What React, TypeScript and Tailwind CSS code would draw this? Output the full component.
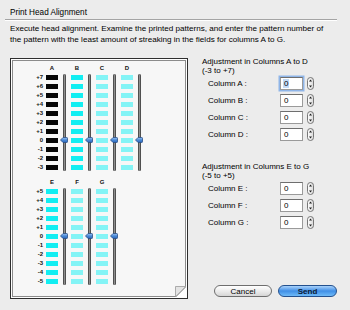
import React from "react";

type GroupProps = {
  letters: string[];
  colors: string[];
  labels: string[];
  knobTop: string;
};

function Knob({ top }: { top: string }) {
  return (
    <svg
      width="8"
      height="6"
      viewBox="0 0 8 6"
      className={"absolute left-[-4px] " + top}
    >
      <defs>
        <linearGradient id="kg" x1="0" y1="0" x2="0" y2="1">
          <stop offset="0" stopColor="#9cc4f2" />
          <stop offset="0.5" stopColor="#4a8ad8" />
          <stop offset="1" stopColor="#2a64b8" />
        </linearGradient>
      </defs>
      <path
        d="M0.5 3 L3 0.5 H6.8 Q7.5 0.5 7.5 1.3 V4.7 Q7.5 5.5 6.8 5.5 H3 Z"
        fill="url(#kg)"
        stroke="#284e86"
        strokeWidth="0.8"
      />
    </svg>
  );
}

function Group({ letters, colors, labels, knobTop }: GroupProps) {
  return (
    <div className="flex">
      <div className="flex w-[30px] flex-col items-end">
        <div className="h-[9px]" />
        {labels.map((l) => (
          <div key={l} className="h-[9px] text-[6px] font-bold leading-[9px] text-[#111]">
            {l}
          </div>
        ))}
      </div>
      <div className="ml-[3px] flex">
        {letters.map((letter, i) => (
          <div key={letter} className="flex">
            <div className="flex w-[12px] flex-col items-center">
              <div className="h-[9px] text-[6px] font-bold leading-[9px] text-[#111]">{letter}</div>
              {labels.map((l) => (
                <div key={l} className="flex h-[9px] items-center">
                  <div className={"h-[5px] w-[12px] " + colors[i]} />
                </div>
              ))}
            </div>
            <div className="mx-[5px] flex w-[3px] flex-col">
              <div className="h-[9px]" />
              <div className="relative mt-[1px] h-[97px] w-[3px] rounded-full border-l border-r border-[#505050] bg-[#8e8e8e]">
                <Knob top={knobTop} />
              </div>
            </div>
          </div>
        ))}
      </div>
    </div>
  );
}

function Stepper() {
  return (
    <svg width="7" height="13" viewBox="0 0 7 13">
      <defs>
        <linearGradient id="sg" x1="0" y1="0" x2="1" y2="0">
          <stop offset="0" stopColor="#ffffff" />
          <stop offset="1" stopColor="#d8d8d8" />
        </linearGradient>
      </defs>
      <rect x="0.5" y="0.5" width="6" height="12" rx="3" fill="url(#sg)" stroke="#6a6a6a" strokeWidth="0.9" />
      <path d="M3.5 2.4 L5 4.4 H2 Z" fill="#222" />
      <path d="M3.5 10.6 L5 8.6 H2 Z" fill="#222" />
    </svg>
  );
}

function FieldRow({ label, focused }: { label: string; focused?: boolean }) {
  return (
    <div className="flex h-[17px] items-center">
      <div className="w-[78px] pl-[6px] text-[8px] leading-[9px]">{label}</div>
      <div
        className={
          "flex h-[13px] w-[23px] items-center border border-[#9a9a9a] border-t-[#6e6e6e] bg-white pl-[2px] text-[8px] leading-[9px] " +
          (focused ? "ring-[1.5px] ring-[#8fb5e8]" : "")
        }
      >
        {focused ? <span className="bg-[#c3dbf7] px-[1px]">0</span> : <span className="px-[1px]">0</span>}
      </div>
      <div className="ml-[4px] flex items-center">
        <Stepper />
      </div>
    </div>
  );
}

export default function App() {
  const topLabels = ["+7", "+6", "+5", "+4", "+3", "+2", "+1", "0", "-1", "-2", "-3"];
  const botLabels = ["+5", "+4", "+3", "+2", "+1", "0", "-1", "-2", "-3", "-4", "-5"];
  return (
    <div className="relative h-[310px] w-[350px] overflow-hidden bg-[#ececec] font-['Liberation_Sans',Arial,sans-serif] text-black">
      <div className="pl-[10px] pt-[8px] text-[8.2px] leading-[10px]">Print Head Alignment</div>
      <div className="ml-[5px] mt-[1px] h-[2px] w-[332px] border-b border-t border-b-white border-t-[#a4a4a4]" />
      <div className="mt-[2px] pl-[10px] text-[8.1px] leading-[11px]">
        Execute head alignment. Examine the printed patterns, and enter the pattern number of
        <br />
        the pattern with the least amount of streaking in the fields for columns A to G.
      </div>
      <div className="ml-[10px] mt-[13px] flex">
        <div className="h-[241px] w-[178px] border border-[#2e2e2e] bg-white p-[1px]">
          <div className="relative h-full w-full border border-[#8c8c8c] bg-[#f7f7f7] pt-[3px]">
            <Group
              letters={["A", "B", "C", "D"]}
              colors={["bg-[#050505]", "bg-[#12eef2]", "bg-[#84f4f6]", "bg-[#84f4f6]"]}
              labels={topLabels}
              knobTop="top-[63px]"
            />
            <div className="mt-[6px]">
              <Group
                letters={["E", "F", "G"]}
                colors={["bg-[#12eef2]", "bg-[#84f4f6]", "bg-[#84f4f6]"]}
                labels={botLabels}
                knobTop="top-[45px]"
              />
            </div>
            <svg width="11" height="11" viewBox="0 0 11 11" className="absolute bottom-[-1px] right-[-1px]">
              <polygon points="11,0 11,11 0,11" fill="#ffffff" />
              <polygon points="11,0.5 0.5,0.5 0.5,11" fill="#e4e4e4" stroke="#9a9a9a" strokeWidth="0.8" />
              <line x1="0.5" y1="11" x2="11" y2="0.5" stroke="#8a8a8a" strokeWidth="0.8" />
            </svg>
          </div>
        </div>
        <div className="flex h-[241px] flex-1 flex-col">
          <div className="pl-[14px]">
            <div className="mt-[-1px] text-[8px] leading-[9px]">Adjustment in Columns A to D</div>
            <div className="text-[8px] leading-[9px]">(-3 to +7)</div>
            <FieldRow label="Column A :" focused />
            <FieldRow label="Column B :" />
            <FieldRow label="Column C :" />
            <FieldRow label="Column D :" />
            <div className="mt-[19px] text-[8px] leading-[9px]">Adjustment in Columns E to G</div>
            <div className="text-[8px] leading-[9px]">(-5 to +5)</div>
            <FieldRow label="Column E :" />
            <FieldRow label="Column F :" />
            <FieldRow label="Column G :" />
          </div>
          <div className="mb-[2px] mt-auto flex justify-end gap-[6px] pr-[13px]">
            <button className="flex h-[12px] w-[58px] items-center justify-center rounded-full border border-[#6e6e6e] bg-gradient-to-b from-[#ffffff] via-[#ececec] to-[#d6d6d6] text-[8px] leading-[9px] text-black">
              Cancel
            </button>
            <button className="flex h-[12px] w-[59px] items-center justify-center rounded-full border border-[#23508e] bg-gradient-to-b from-[#a9d2fa] via-[#3f8fe6] to-[#6fbaf8] text-[8px] font-semibold leading-[9px] text-[#0b1a33]">
              Send
            </button>
          </div>
        </div>
      </div>
    </div>
  );
}
